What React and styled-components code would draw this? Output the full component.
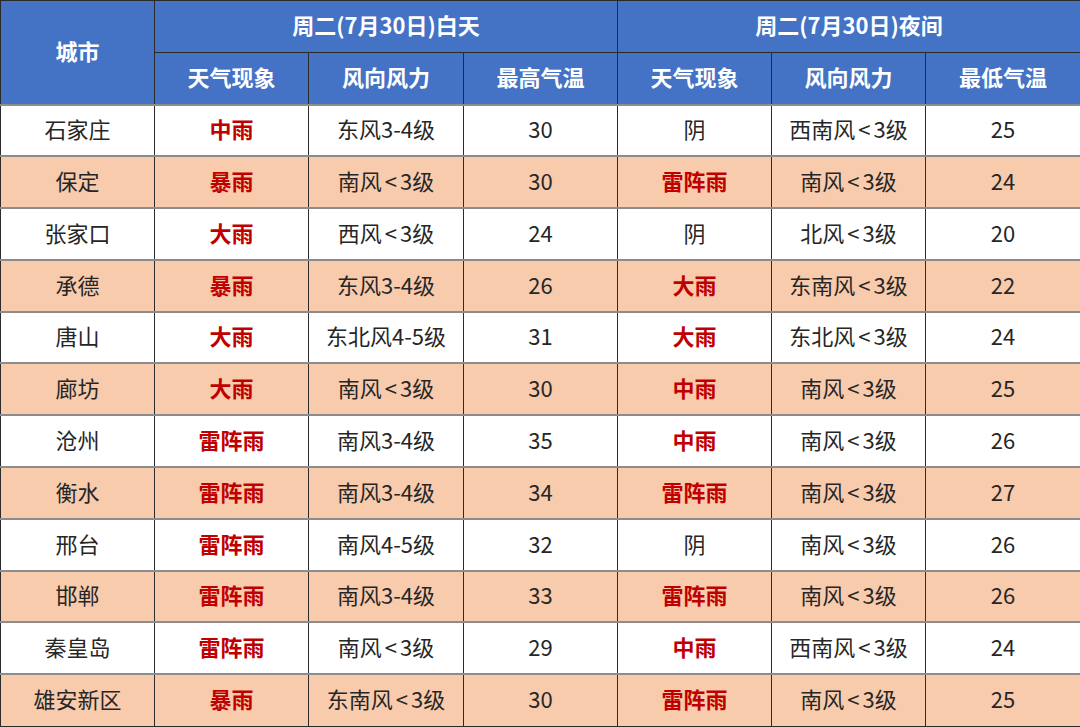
import React from "react";
import styled, { createGlobalStyle } from "styled-components";

const GlobalStyle = createGlobalStyle`
    html, body {
        margin: 0;
        padding: 0;
        background: #ffffff;
        overflow: hidden;
    }
    body {
        font-family: "Noto Sans CJK SC", "Noto Sans", sans-serif;
    }
`;

// 데이터
const rows = [
    ["石家庄", "中雨", "东风3-4级", "30", "阴", "西南风<3级", "25"],
    ["保定", "暴雨", "南风<3级", "30", "雷阵雨", "南风<3级", "24"],
    ["张家口", "大雨", "西风<3级", "24", "阴", "北风<3级", "20"],
    ["承德", "暴雨", "东风3-4级", "26", "大雨", "东南风<3级", "22"],
    ["唐山", "大雨", "东北风4-5级", "31", "大雨", "东北风<3级", "24"],
    ["廊坊", "大雨", "南风<3级", "30", "中雨", "南风<3级", "25"],
    ["沧州", "雷阵雨", "南风3-4级", "35", "中雨", "南风<3级", "26"],
    ["衡水", "雷阵雨", "南风3-4级", "34", "雷阵雨", "南风<3级", "27"],
    ["邢台", "雷阵雨", "南风4-5级", "32", "阴", "南风<3级", "26"],
    ["邯郸", "雷阵雨", "南风3-4级", "33", "雷阵雨", "南风<3级", "26"],
    ["秦皇岛", "雷阵雨", "南风<3级", "29", "中雨", "西南风<3级", "24"],
    ["雄安新区", "暴雨", "东南风<3级", "30", "雷阵雨", "南风<3级", "25"],
];

const isRain = w => w.includes("雨");

// "<" 주변에 약간의 여백
const Wind = ({ text }) => {
    const parts = text.split("<");
    if (parts.length === 1) return text;
    return (
        <>
            {parts[0]}
            <Lt>&lt;</Lt>
            {parts[1]}
        </>
    );
};

const App = () => {
    return (
        <>
            <GlobalStyle />
            <Table>
                <colgroup>
                    <col style={{ width: 154 }} />
                    <col style={{ width: 154 }} />
                    <col style={{ width: 155 }} />
                    <col style={{ width: 154 }} />
                    <col style={{ width: 154 }} />
                    <col style={{ width: 154 }} />
                    <col style={{ width: 155 }} />
                </colgroup>
                <thead>
                    <HeadRow>
                        <Th rowSpan={2}>城市</Th>
                        <Th colSpan={3}>周二(7月30日)白天</Th>
                        <Th colSpan={3}>周二(7月30日)夜间</Th>
                    </HeadRow>
                    <HeadRow>
                        <Th>天气现象</Th>
                        <Th>风向风力</Th>
                        <Th>最高气温</Th>
                        <Th>天气现象</Th>
                        <Th>风向风力</Th>
                        <Th>最低气温</Th>
                    </HeadRow>
                </thead>
                <tbody>
                    {rows.map((r, i) => (
                        <Row key={r[0]} $striped={i % 2 === 1}>
                            <Td>{r[0]}</Td>
                            <Td $red={isRain(r[1])}>{r[1]}</Td>
                            <Td>
                                <Wind text={r[2]} />
                            </Td>
                            <Td>{r[3]}</Td>
                            <Td $red={isRain(r[4])}>{r[4]}</Td>
                            <Td>
                                <Wind text={r[5]} />
                            </Td>
                            <Td>{r[6]}</Td>
                        </Row>
                    ))}
                </tbody>
            </Table>
        </>
    );
};

const Table = styled.table`
    width: 1080px;
    table-layout: fixed;
    border-collapse: collapse;
    font-size: 22px;
    line-height: 1.2;
`;

const HeadRow = styled.tr`
    height: 52px;
    background: #4472c4;
`;

const Th = styled.th`
    border: 1px solid #2b2b2b;
    color: #ffffff;
    font-weight: 700;
    text-align: center;
    vertical-align: middle;
    padding: 0 0 4px;
`;

const Row = styled.tr`
    height: 51.8px;
    background: ${props => (props.$striped ? "#f8cbad" : "#ffffff")};
`;

const Td = styled.td`
    border-left: 1px solid #2b2b2b;
    border-right: 1px solid #2b2b2b;
    border-top: 2px solid #8c8c8c;
    border-bottom: 2px solid #8c8c8c;
    color: ${props => (props.$red ? "#c00000" : "#262626")};
    font-weight: ${props => (props.$red ? 700 : 400)};
    text-align: center;
    vertical-align: middle;
    padding: 0 0 4px;
    white-space: nowrap;

    tr:last-child > & {
        border-bottom: 1px solid #2b2b2b;
    }
`;

const Lt = styled.span`
    margin: 0 3px;
`;

export default App;
